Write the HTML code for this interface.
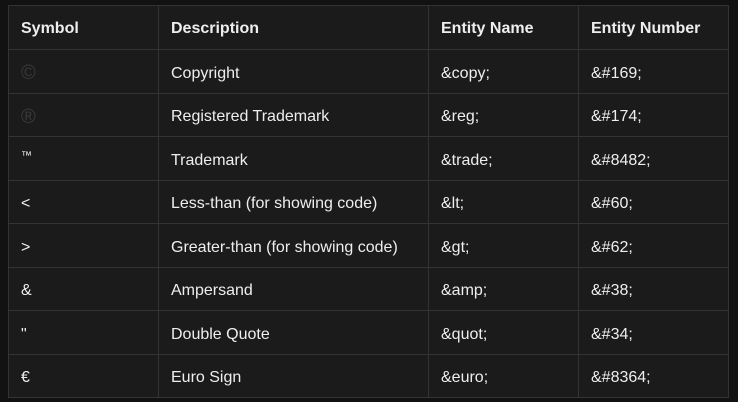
<!DOCTYPE html>
<html><head><style>
html,body{margin:0;background:#121212;width:738px;height:402px;overflow:hidden}
table{position:absolute;left:8px;top:5px;border-collapse:collapse;background:#1b1b1b;font-family:"Liberation Sans",sans-serif;font-size:16px;color:#eee}
td,th{border:1px solid #333;padding:5px 0 0 12px;text-align:left}
th{padding-top:2px}
tr{height:43.5px}
tr.h{height:44px}
th{font-weight:bold}
.d{color:#3a3a3a;font-size:20px}
</style></head><body>
<table>
<colgroup><col style="width:150px"><col style="width:270px"><col style="width:150px"><col style="width:150px"></colgroup>
<tr class="h"><th>Symbol</th><th>Description</th><th>Entity Name</th><th>Entity Number</th></tr>
<tr><td class="d">©</td><td>Copyright</td><td>&amp;copy;</td><td>&amp;#169;</td></tr>
<tr><td class="d">®</td><td>Registered Trademark</td><td>&amp;reg;</td><td>&amp;#174;</td></tr>
<tr><td style="font-size:11px;vertical-align:top;padding-top:13px">™</td><td>Trademark</td><td>&amp;trade;</td><td>&amp;#8482;</td></tr>
<tr><td>&lt;</td><td>Less-than (for showing code)</td><td>&amp;lt;</td><td>&amp;#60;</td></tr>
<tr><td>&gt;</td><td>Greater-than (for showing code)</td><td>&amp;gt;</td><td>&amp;#62;</td></tr>
<tr><td>&amp;</td><td>Ampersand</td><td>&amp;amp;</td><td>&amp;#38;</td></tr>
<tr><td>"</td><td>Double Quote</td><td>&amp;quot;</td><td>&amp;#34;</td></tr>
<tr><td>€</td><td>Euro Sign</td><td>&amp;euro;</td><td>&amp;#8364;</td></tr>
</table>
</body></html>
